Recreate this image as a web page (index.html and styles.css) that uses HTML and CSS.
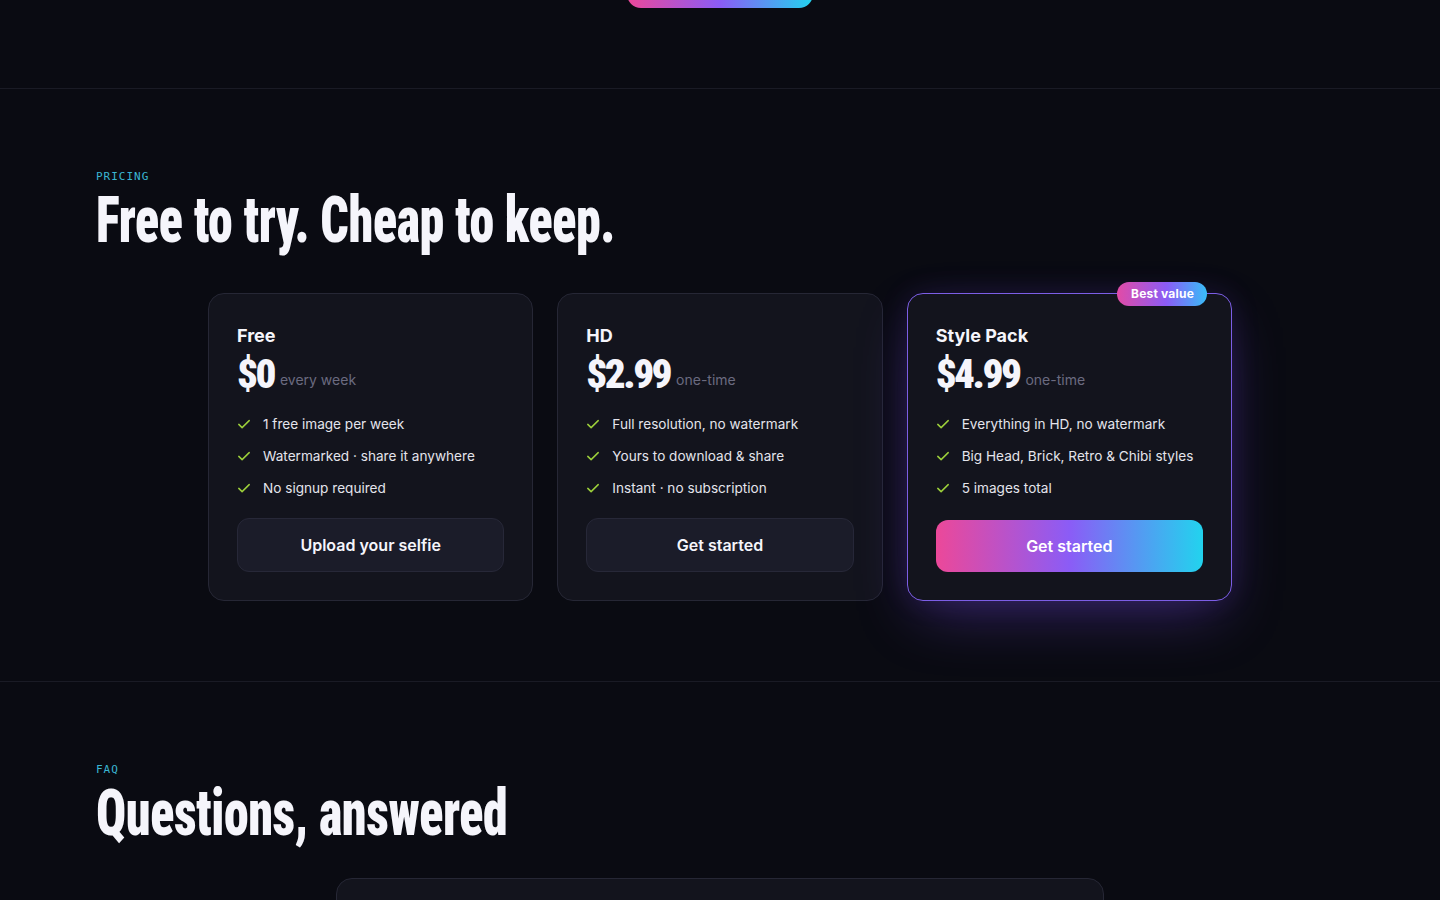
FILE: index.html
```html
<!DOCTYPE html>
<html lang="en">
<head>
<meta charset="utf-8">
<title>Pricing</title>
<link rel="stylesheet" href="styles.css">
</head>
<body>
<section class="hero-end">
  <a class="cta" href="#pricing"><span class="cta-label">Try it free</span></a>
</section>

<section class="section" id="pricing">
  <div class="eyebrow">PRICING</div>
  <h2 class="title">Free to try. Cheap to keep.</h2>

  <div class="plans">
    <div class="plan">
      <h3 class="plan-name">Free</h3>
      <div class="price-row"><span class="price">$0</span><span class="period">every week</span></div>
      <ul class="features">
        <li><svg class="check" viewBox="0 0 14 14"><path d="M1.8 7.4l3.3 3.2L12.2 3.6"/></svg>1 free image per week</li>
        <li><svg class="check" viewBox="0 0 14 14"><path d="M1.8 7.4l3.3 3.2L12.2 3.6"/></svg>Watermarked · share it anywhere</li>
        <li><svg class="check" viewBox="0 0 14 14"><path d="M1.8 7.4l3.3 3.2L12.2 3.6"/></svg>No signup required</li>
      </ul>
      <a class="btn" href="#">Upload your selfie</a>
    </div>

    <div class="plan">
      <h3 class="plan-name">HD</h3>
      <div class="price-row"><span class="price">$2.99</span><span class="period">one-time</span></div>
      <ul class="features">
        <li><svg class="check" viewBox="0 0 14 14"><path d="M1.8 7.4l3.3 3.2L12.2 3.6"/></svg>Full resolution, no watermark</li>
        <li><svg class="check" viewBox="0 0 14 14"><path d="M1.8 7.4l3.3 3.2L12.2 3.6"/></svg>Yours to download &amp; share</li>
        <li><svg class="check" viewBox="0 0 14 14"><path d="M1.8 7.4l3.3 3.2L12.2 3.6"/></svg>Instant · no subscription</li>
      </ul>
      <a class="btn" href="#">Get started</a>
    </div>

    <div class="plan plan-featured">
      <span class="badge">Best value</span>
      <h3 class="plan-name">Style Pack</h3>
      <div class="price-row"><span class="price">$4.99</span><span class="period">one-time</span></div>
      <ul class="features">
        <li><svg class="check" viewBox="0 0 14 14"><path d="M1.8 7.4l3.3 3.2L12.2 3.6"/></svg>Everything in HD, no watermark</li>
        <li><svg class="check" viewBox="0 0 14 14"><path d="M1.8 7.4l3.3 3.2L12.2 3.6"/></svg>Big Head, Brick, Retro &amp; Chibi styles</li>
        <li><svg class="check" viewBox="0 0 14 14"><path d="M1.8 7.4l3.3 3.2L12.2 3.6"/></svg>5 images total</li>
      </ul>
      <a class="btn btn-gradient" href="#">Get started</a>
    </div>
  </div>
</section>

<section class="section" id="faq">
  <div class="eyebrow">FAQ</div>
  <h2 class="title">Questions, answered</h2>
  <div class="faq">
    <div class="faq-item">
      <div class="faq-q">How does it work?</div>
      <div class="faq-a">Upload a selfie, pick a style, and get your image in seconds.</div>
    </div>
  </div>
</section>
</body>
</html>
```
FILE: styles.css
```css
*{box-sizing:border-box}
html,body{margin:0;padding:0}
body{
  background:#0a0b12;
  color:#e4e4ec;
  font-family:Inter,"Noto Sans",sans-serif;
  -webkit-font-smoothing:antialiased;
}
a{text-decoration:none;color:inherit}

.hero-end{
  display:flex;
  justify-content:center;
  padding-bottom:80px;
  border-bottom:1px solid #1a1b25;
}
.cta{
  margin-top:-44px;
  width:186px;
  height:52px;
  border-radius:14px;
  background:linear-gradient(90deg,#ec4899 0%,#8b5cf6 50%,#22d3ee 100%);
  color:#fff;
  font-weight:600;
  font-size:14px;
  display:flex;
  align-items:flex-start;
  justify-content:center;
  padding-top:12px;
  white-space:nowrap;
  overflow:hidden;
}
.cta-label{line-height:18px}

.section{
  padding:80px 96px;
  border-bottom:1px solid #1a1b25;
}
.eyebrow{
  font-family:"DejaVu Sans Mono","Liberation Mono",monospace;
  font-size:11px;
  line-height:16px;
  letter-spacing:1px;
  color:#3ab6d2;
  margin-bottom:1px;
}
.title{
  margin:0;
  font-family:Roboto,"Open Sans",sans-serif;
  font-stretch:75%;
  font-weight:900;
  font-size:64px;
  line-height:70px;
  letter-spacing:-0.5px;
  color:#f5f5fb;
  transform:scaleX(0.78);
  transform-origin:left center;
  white-space:nowrap;
}

.plans{
  max-width:1024px;
  margin:37px auto 0;
  display:grid;
  grid-template-columns:repeat(3,1fr);
  gap:24px;
}
.plan{
  position:relative;
  display:flex;
  flex-direction:column;
  background:#13141d;
  border:1px solid #262735;
  border-radius:16px;
  padding:28px;
}
.plan-featured{
  border-color:#7c5ee6;
  box-shadow:0 22px 60px -12px rgba(124,77,240,0.38),0 0 30px rgba(124,77,240,0.12);
}
.badge{
  position:absolute;
  top:-12px;
  right:24px;
  height:24px;
  padding:0 13px 0 14px;
  border-radius:999px;
  background:linear-gradient(90deg,#e24ba6 0%,#8b5cf6 55%,#38bdf8 100%);
  color:#fff;
  font-size:12px;
  font-weight:700;
  line-height:24px;
  letter-spacing:0.2px;
}
.plan-name{
  margin:0;
  font-size:18px;
  line-height:26px;
  font-weight:700;
  color:#f5f5fb;
  padding-top:1px;
}
.price-row{
  display:flex;
  align-items:flex-end;
  gap:6px;
  margin-top:4px;
}
.price{
  font-family:Roboto,"Open Sans",sans-serif;
  font-stretch:75%;
  font-weight:900;
  font-size:41px;
  line-height:42px;
  letter-spacing:-2.5px;
  color:#f5f5fb;
}
.period{
  font-size:14px;
  line-height:20px;
  padding-bottom:5px;
  color:#6b6b80;
}
.features{
  list-style:none;
  margin:19px 0 0;
  padding:0;
  display:flex;
  flex-direction:column;
  gap:12px;
}
.features li{
  display:flex;
  align-items:center;
  gap:12px;
  font-size:13.6px;
  line-height:20px;
  color:#e4e4ec;
}
.check{
  width:14px;
  height:14px;
  flex:none;
  fill:none;
  stroke:#9ccf3a;
  stroke-width:1.5;
  stroke-linecap:round;
  stroke-linejoin:round;
}
.btn{
  margin-top:20px;
  height:54px;
  border-radius:12px;
  border:1px solid #272838;
  background:#1b1c29;
  color:#f5f5fb;
  font-size:16px;
  font-weight:600;
  display:flex;
  align-items:center;
  justify-content:center;
}
.btn-gradient{
  margin-top:22px;
  height:52px;
  border:none;
  background:linear-gradient(90deg,#ec4899 0%,#8b5cf6 50%,#22d3ee 100%);
  color:#fff;
}

#faq{border-bottom:none}
.faq{
  max-width:768px;
  margin:29px auto 0;
  background:#13141d;
  border:1px solid #262735;
  border-radius:16px;
}
.faq-item{padding:28px}
.faq-q{font-size:16px;line-height:24px;font-weight:600;color:#f5f5fb}
.faq-a{margin-top:8px;font-size:14px;color:#9a9aae}
```
